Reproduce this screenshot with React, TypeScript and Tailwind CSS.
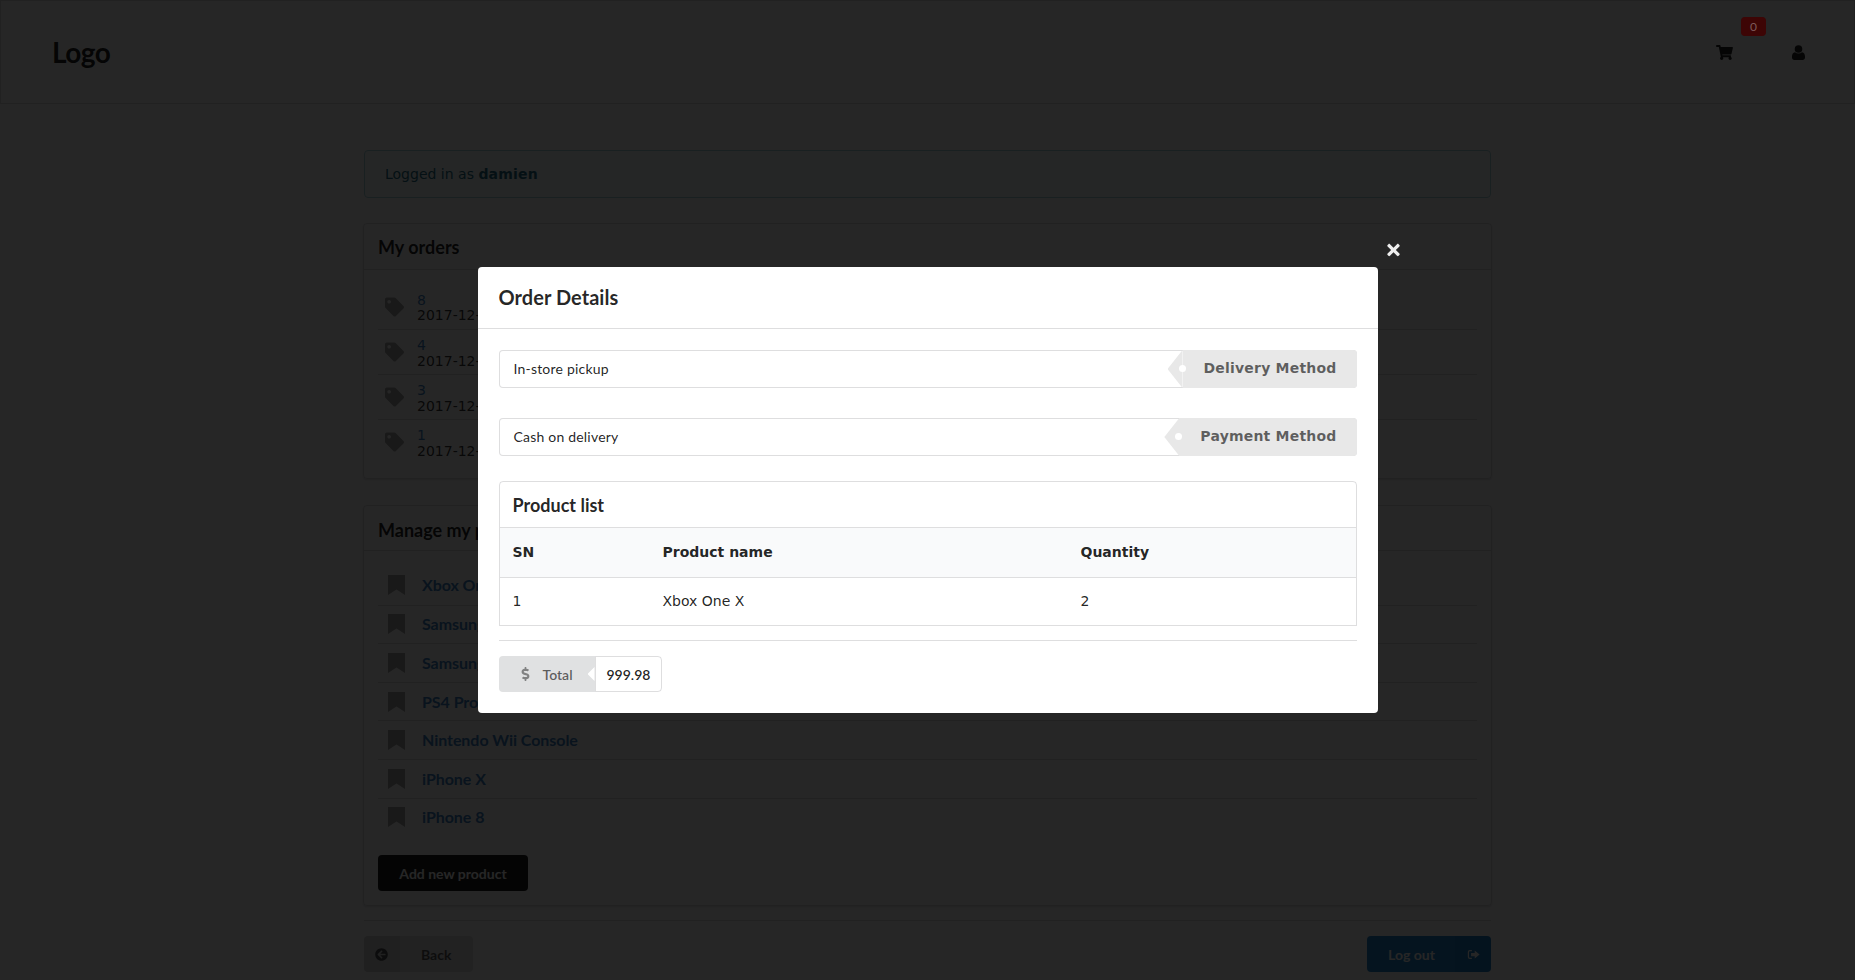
import { FaArrowCircleLeft, FaDollarSign, FaShoppingCart, FaTag, FaTimes } from 'react-icons/fa';

const orders = ['8', '4', '3', '1'];
const products = ['Xbox One X', 'Samsung Galaxy S8', 'Samsung Galaxy Note 8', 'PS4 Pro', 'Nintendo Wii Console', 'iPhone X', 'iPhone 8'];

function SignOutIcon({ className }: { className?: string }) {
  return (
    <svg viewBox="0 0 16 16" className={className} fill="currentColor">
      <path d="M6 2.500H3.500A2.500 2.500 0 0 0 1 5v6a2.500 2.500 0 0 0 2.500 2.500H6V12H3.500a1 1 0 0 1-1-1V5a1 1 0 0 1 1-1H6z" />
      <path d="M9.500 3 15.500 8l-6 5v-3H5V6h4.500z" />
    </svg>
  );
}

function UserIcon({ className }: { className?: string }) {
  return (
    <svg viewBox="0 0 13 15" className={className} fill="currentColor">
      <circle cx="6.500" cy="4" r="3.800" />
      <path d="M3 7.200c1 .8 2.200 1.200 3.500 1.200S9 8 10 7.200c1.900.3 3 1.900 3 4.300v1.100c0 1.500-1 2.400-2.400 2.400H2.400C1 15 0 14.100 0 12.600v-1.100c0-2.400 1.100-4 3-4.300z" />
    </svg>
  );
}

function BookmarkIcon({ className }: { className?: string }) {
  return (
    <svg viewBox="0 0 17 20" className={className} fill="currentColor">
      <path d="M0 0h17v20l-8.500-5.500L0 20z" />
    </svg>
  );
}

function TagLabelRow({ value, label }: { value: string; label: string }) {
  return (
    <div className="flex h-[38px] rounded border border-[#22242626] bg-white">
      <div className="flex flex-1 items-center pb-px pl-[14px] text-[14px] tracking-[0.2px] text-[#000000de]">{value}</div>
      <div className="relative -my-px -mr-px flex h-[38px] items-center rounded-r bg-[#e8e8e8] pb-[2px] pl-[21px] pr-[20px] font-['DejaVu_Sans',sans-serif] text-[14px] font-bold tracking-[0.2px] text-[#0009]">
        <div className="absolute top-0 -left-[15px] h-[38px] w-[15px] bg-[#e8e8e8] [clip-path:polygon(100%_0,0_50%,100%_100%)]" />
        <div className="absolute top-[15px] -left-[4px] h-[7px] w-[7px] rounded-full bg-white" />
        {label}
      </div>
    </div>
  );
}

export default function App() {
  return (
    <div className="relative h-[980px] overflow-hidden bg-white font-['Lato',sans-serif] text-[14px] text-[#000000de]">
      <header className="flex h-[104px] items-center justify-between border border-[#22242626] pl-[51px]">
        <div className="text-[28px] font-bold tracking-[-0.5px] text-[#000000de]">Logo</div>
        <div className="flex items-center pr-[49px] pt-[1px]">
          <div className="relative mr-[59px]">
            <FaShoppingCart className="h-[15px] w-[17px] text-[#000000de]" />
            <span className="absolute -top-[28px] left-[25px] z-20 flex h-[19px] w-[25px] items-center justify-center rounded bg-[#3d0505] text-[12px] text-[#7d5a5a]">0</span>
          </div>
          <UserIcon className="h-[15px] w-[13px] text-[#000000de]" />
        </div>
      </header>

      <main className="mx-auto w-[1127px] pt-[46px]">
        <div className="flex h-[48px] items-center rounded border border-[#a9d5de] bg-[#f8ffff] pl-[20px] font-['DejaVu_Sans',sans-serif] text-[14px] text-[#276f86]">
          Logged in as&nbsp;<b className="tracking-[0.2px]">damien</b>
        </div>

        <section className="-mx-px mt-[25px] rounded border border-[#22242626] shadow-[0_1px_2px_0_#22242626]">
          <h3 className="flex h-[46px] items-center border-b border-[#22242626] pt-[2px] pl-[14px] text-[18px] font-bold">My orders</h3>
          <div className="px-[14px] pt-[14px] pb-[14px] font-['DejaVu_Sans',sans-serif]">
            {orders.map((id, i) => (
              <div key={id} className={`flex h-[45px] items-center ${i > 0 ? 'border-t border-[#22242626]' : ''}`}>
                <FaTag className="ml-[7px] h-[20px] w-[19px] text-[#a8a8a8]" />
                <div className="ml-[13px] pt-[3px] text-[14px] leading-[15.500px] text-[#000000cc]">
                  <div className="text-[#4183c4]">{id}</div>
                  <div>2017-12-10</div>
                </div>
              </div>
            ))}
          </div>
        </section>

        <section className="-mx-px mt-[26px] rounded border border-[#22242626] shadow-[0_1px_2px_0_#22242626]">
          <h3 className="flex h-[45px] items-center border-b border-[#22242626] pt-[4px] pl-[14px] text-[18px] font-bold">Manage my products</h3>
          <div className="px-[14px] pt-[15px]">
            {products.map((name, i) => (
              <div key={name} className={`flex h-[38.600px] items-center ${i > 0 ? 'border-t border-[#22242626]' : ''}`}>
                <BookmarkIcon className="ml-[10px] h-[20px] w-[17px] text-[#a8a8a8]" />
                <span className="ml-[17px] text-[16px] font-bold tracking-[-0.05px] text-[#4183c4]">{name}</span>
              </div>
            ))}
          </div>
          <button className="mt-[19px] mb-[14px] ml-[14px] flex h-[36px] w-[150px] items-center justify-center rounded bg-[#1b1c1d] text-[14px] font-bold text-white">
            Add new product
          </button>
        </section>

        <div className="mt-[14px] border-t border-[#22242626]" />

        <div className="mt-[15px] flex justify-between">
          <button className="flex h-[36px] w-[109px] items-center rounded bg-[#e0e1e2] font-bold text-[#0009]">
            <span className="flex h-full w-[36px] items-center justify-center rounded-l bg-black/5"><FaArrowCircleLeft className="h-[13px] w-[13px] -translate-x-px" /></span>
            <span className="ml-[21px]">Back</span>
          </button>
          <button className="flex h-[36px] w-[124px] items-center rounded bg-[#2185d0] font-bold text-white">
            <span className="ml-[21px]">Log out</span>
            <span className="ml-auto flex h-full w-[36px] items-center justify-center rounded-r bg-black/5"><SignOutIcon className="h-[13px] w-[13px]" /></span>
          </button>
        </div>
      </main>

      <div className="absolute inset-0 z-10 flex items-start justify-center bg-black/85">
        <div className="relative mt-[267px] h-[446px] w-[900px] rounded bg-white">
          <FaTimes className="absolute -top-[26px] -right-[22px] h-[18px] w-[13px] text-[#eeeeee]" />
          <div className="flex h-[62px] items-center border-b border-[#22242626] pb-[2px] pl-[21px] text-[20px] font-bold tracking-[0.05px] text-[#000000d9]">Order Details</div>
          <div className="px-[21px] pt-[21px]">
            <TagLabelRow value="In-store pickup" label="Delivery Method" />
            <div className="mt-[30px]">
              <TagLabelRow value="Cash on delivery" label="Payment Method" />
            </div>

            <div className="mt-[25px] rounded-t border border-[#22242626]">
              <h3 className="flex h-[46px] items-center border-b border-[#22242626] pt-[1px] pl-[13px] text-[18px] font-bold">Product list</h3>
              <table className="w-full table-fixed border-collapse font-['DejaVu_Sans',sans-serif] text-[14px]">
                <thead>
                  <tr className="h-[49px] border-b border-[#22242626] bg-[#f9fafb] text-left">
                    <th className="w-[163px] pl-[13px] font-bold">SN</th>
                    <th className="w-[418px] font-bold">Product name</th>
                    <th className="font-bold">Quantity</th>
                  </tr>
                </thead>
                <tbody>
                  <tr className="h-[48px]">
                    <td className="pl-[13px]">1</td>
                    <td>Xbox One X</td>
                    <td>2</td>
                  </tr>
                </tbody>
              </table>
            </div>

            <div className="mt-[14px] border-t border-[#22242626]" />

            <div className="mt-[15px] flex h-[36px] w-fit rounded">
              <div className="relative flex w-[96px] items-center rounded-l bg-[#e0e1e2] font-semibold text-[#0009]">
                <FaDollarSign className="ml-[22px] h-[14px] w-[9px] opacity-70" />
                <span className="ml-[13px]">Total</span>
                <div className="absolute top-[11px] right-0 h-[14px] w-[7px] bg-white [clip-path:polygon(100%_0,0_50%,100%_100%)]" />
              </div>
              <div className="flex w-[67px] items-center rounded-r border border-[#22242626] pl-[11px] font-semibold text-[#000000de]">999.98</div>
            </div>
          </div>
        </div>
      </div>
    </div>
  );
}
